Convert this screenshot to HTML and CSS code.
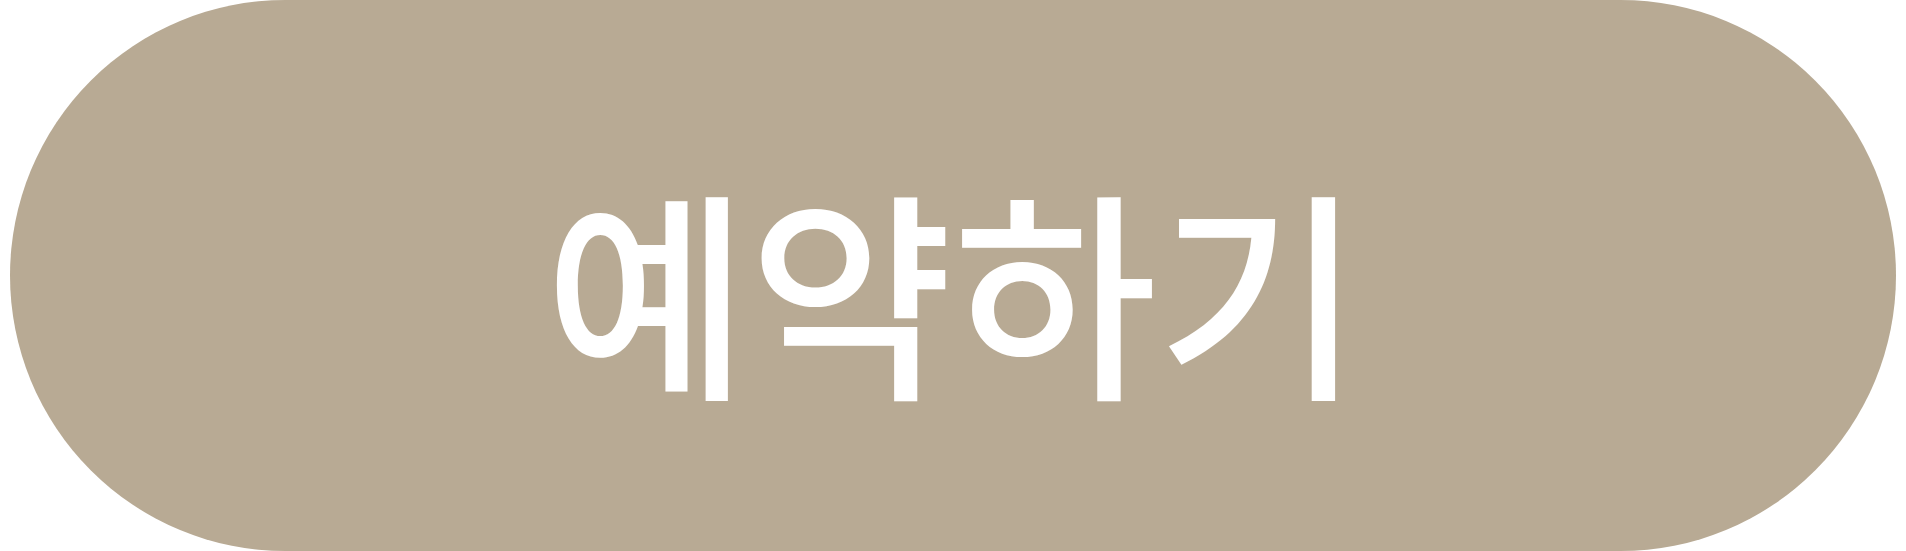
FILE: index.html
```html
<!DOCTYPE html>
<html lang="ko">
<head>
    <meta charset="UTF-8">
    <meta name="viewport" content="width=device-width, initial-scale=1.0">
    <title>예약하기</title>
    <link rel="stylesheet" href="styles.css">
</head>
<body>
    <div class="reserve-wrap">
        <button type="button" class="reserve-btn">예약하기</button>
    </div>
</body>
</html>
```

FILE: styles.css
```css
body {
    margin: 0;
    background: #fff;
}

.reserve-wrap {
    padding: 0 10px;
}

.reserve-btn {
    display: flex;
    justify-content: center;
    align-items: center;
    width: 100%;
    height: 551px;
    padding: 18px 0 0;
    border: none;
    border-radius: 276px;
    background-color: #b8aa94;
    color: #fff;
    font-family: "Noto Sans CJK KR", "Noto Sans", sans-serif;
    font-size: 222px;
    font-weight: 500;
    line-height: 1;
    cursor: pointer;
}
```
